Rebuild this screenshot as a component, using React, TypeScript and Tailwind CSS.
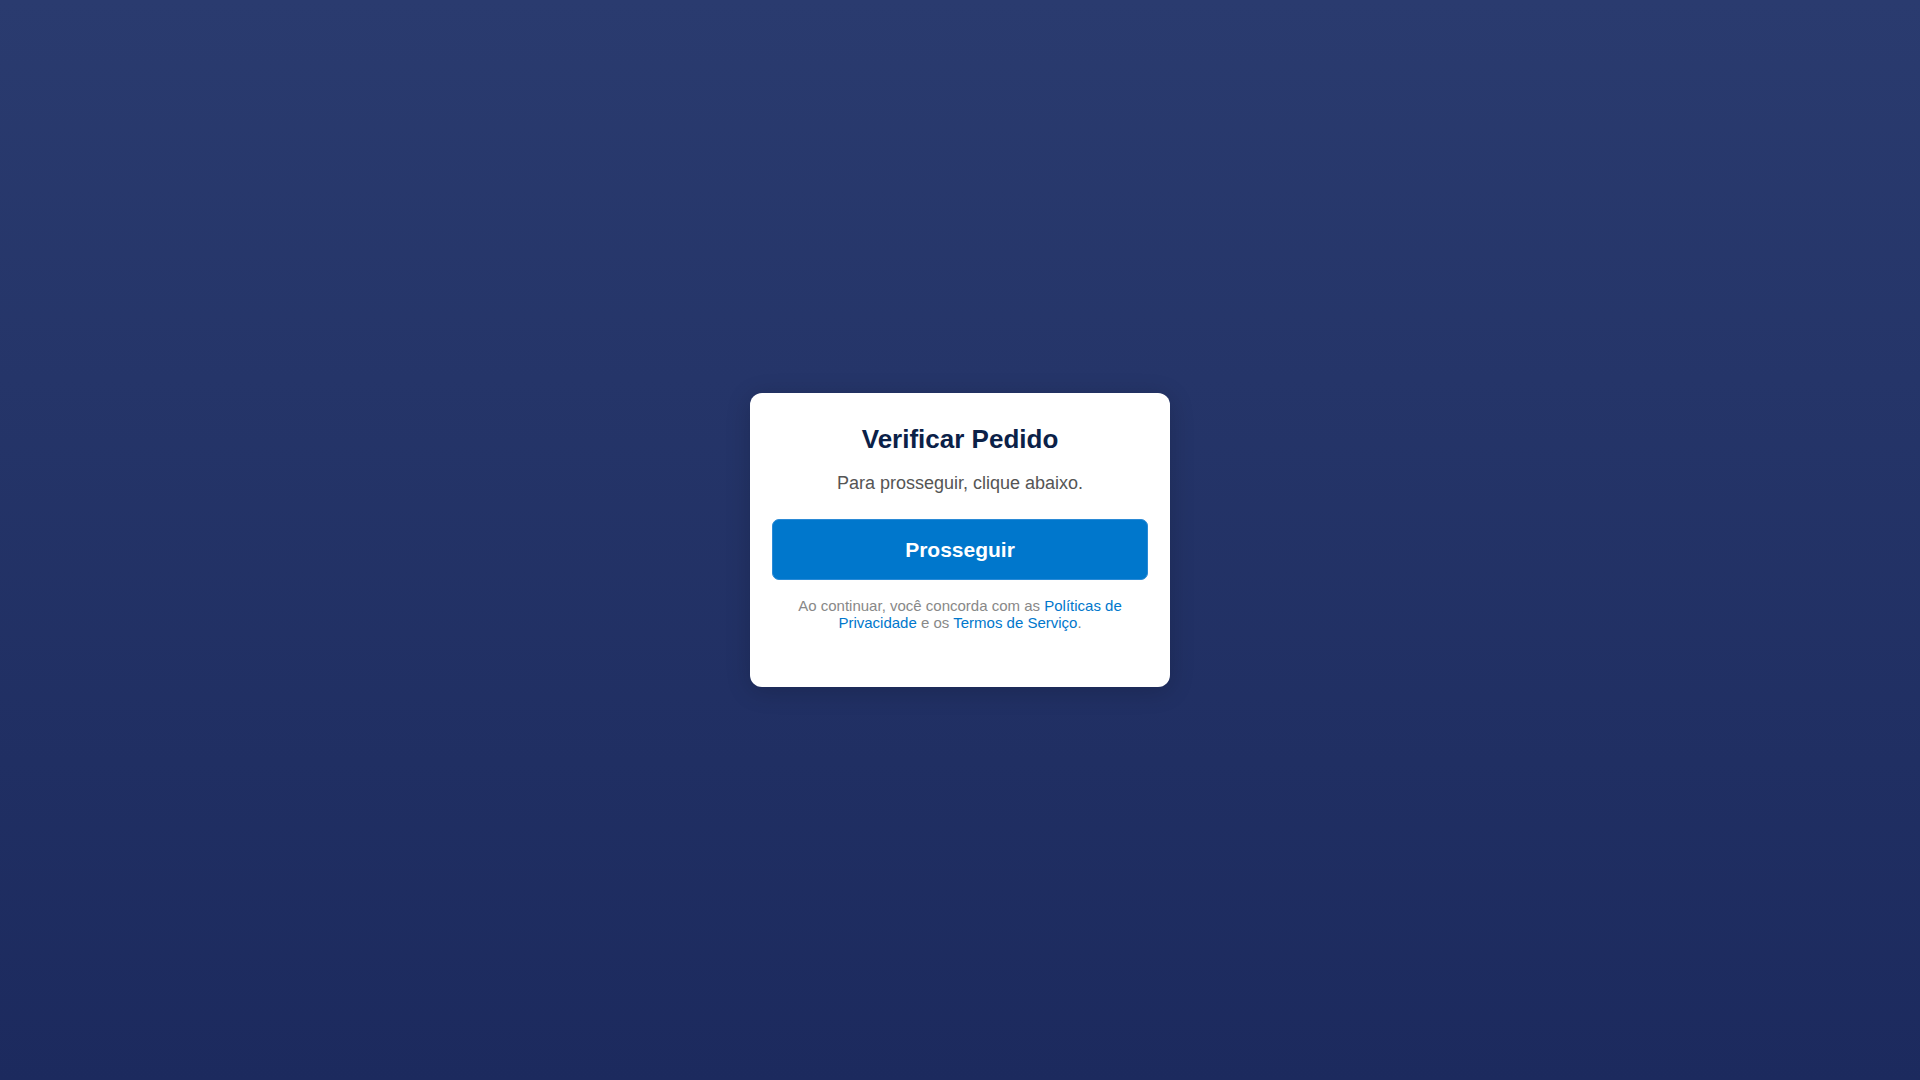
import React from "react";

export default function App() {
  return (
    <div
      className="w-full h-screen flex items-center justify-center bg-gradient-to-b from-[#2a3b6f] to-[#1c2a5e]"
      style={{ fontFamily: '"Liberation Sans", Arial, sans-serif' }}
    >
      <div className="w-[420px] bg-white rounded-[12px] shadow-[0_4px_24px_rgba(0,0,0,0.18)] px-[22px] pt-[31px] pb-[55px] text-center">
        <h1 className="text-[26px] leading-[30px] font-bold text-[#0b2148] m-0">
          Verificar Pedido
        </h1>
        <p className="mt-[19px] text-[18px] leading-[20.7px] text-[#555555]">
          Para prosseguir, clique abaixo.
        </p>
        <button className="mt-[24.5px] w-full h-[61.5px] rounded-[7px] bg-[#0077cc] border border-[#2a8ad6] text-white text-[21px] font-bold">
          Prosseguir
        </button>
        <p className="mt-[18px] text-[15px] leading-[16.8px] text-[#888888]">
          Ao continuar, você concorda com as{" "}
          <a className="text-[#0077cc]">Políticas de Privacidade</a> e os{" "}
          <a className="text-[#0077cc]">Termos de Serviço</a>.
        </p>
      </div>
    </div>
  );
}
